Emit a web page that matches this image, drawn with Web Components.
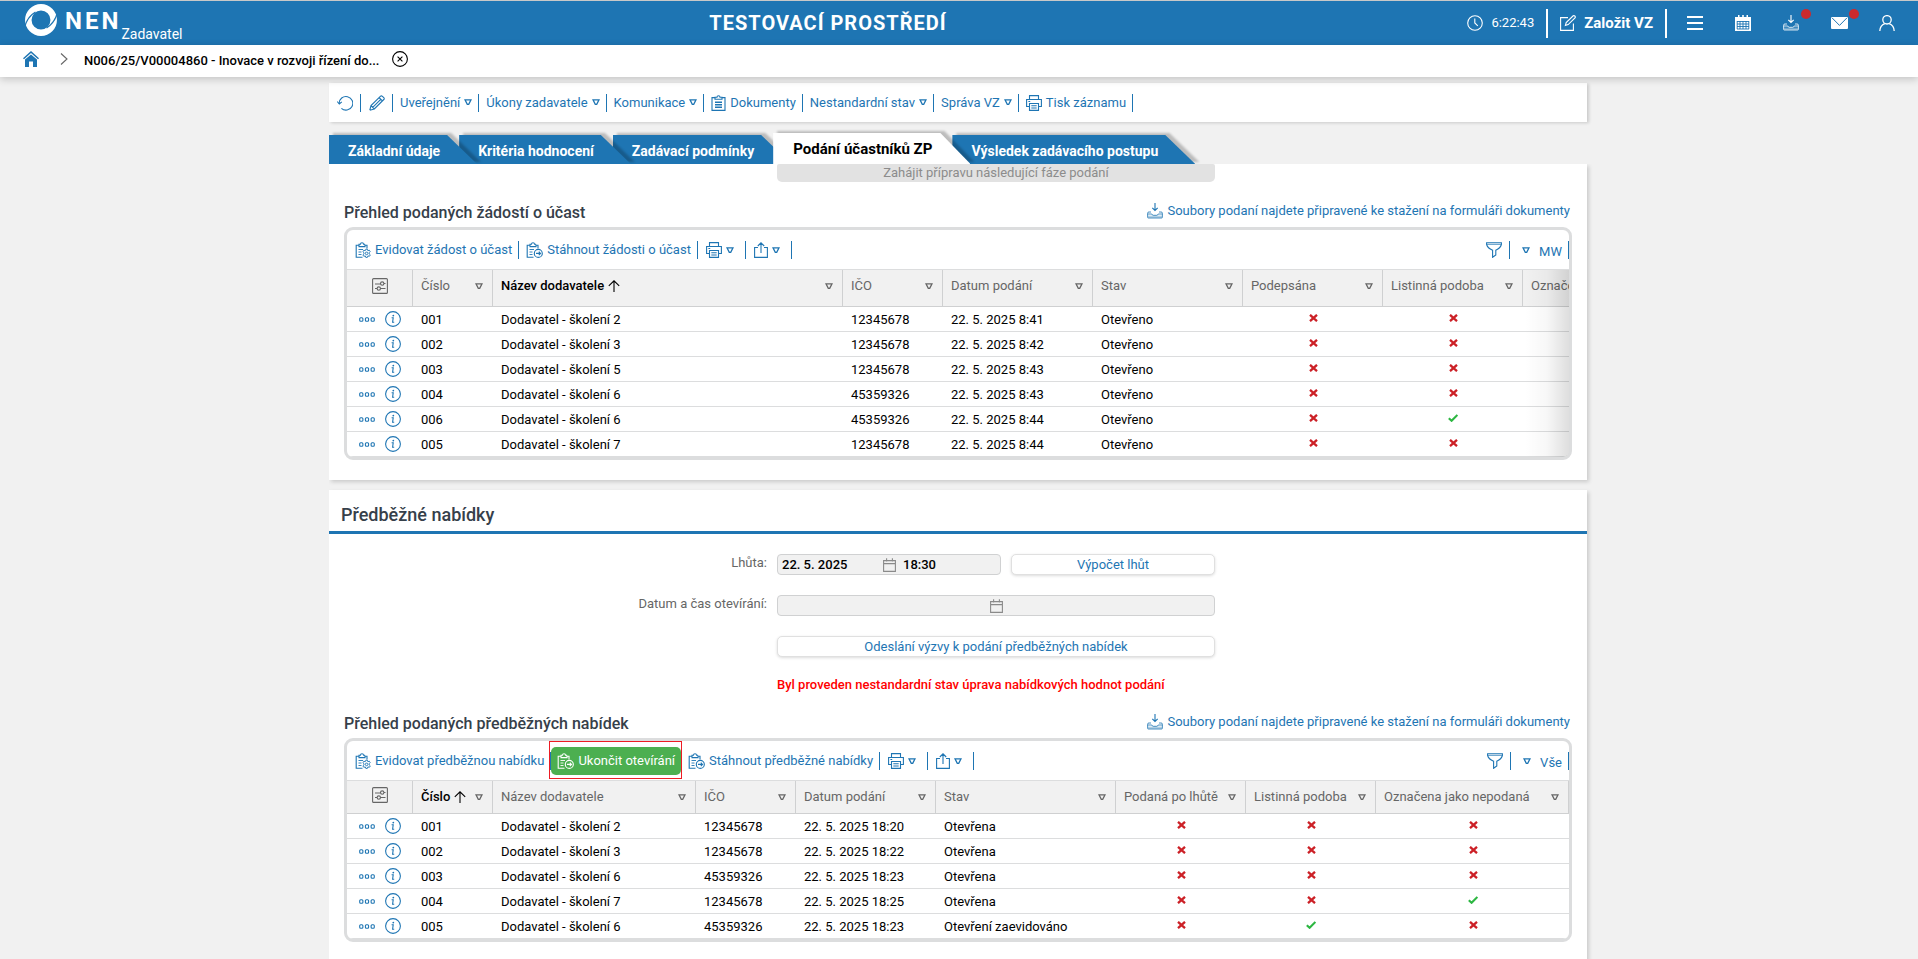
<!DOCTYPE html>
<html lang="cs">
<head>
<meta charset="utf-8">
<title>NEN – Zadavatel</title>
<style>
html,body{height:100%}
body{margin:0;background:#f1f1f1;color:#000;font:13px/16px Roboto,"Liberation Sans",sans-serif;overflow:hidden;
--blue:#1e75b3;--line:#dcddde}
</style>
</head>
<body>
<nen-app></nen-app>
<script>
const S='fill="none" stroke="currentColor" stroke-width="1.1"';
const CLIP='<path d="M12 6.500V3.200H10M4 3.200H1.200V15.300H7.500M10 2.400V4.600H4V2.200H5.400Q5.500.7 7 .7T8.600 2.200H10"/><path d="M3.500 7.500H8M3.500 10H6.500M3.500 12.500H6.500" stroke-width=".9"/>';
const ICONS={
 refresh:[16,16,`<g ${S}><path d="M2.2 8.5A6.8 6.8 0 1 1 4.4 13.3"/><path d="M.3 6.6 2.3 9 4.8 6.8"/></g>`],
 pencil:[16,16,`<g ${S}><path d="M.8 15.2 2 10.6 11.6 1.2Q12.4.4 13.4 1.3L14.8 2.7Q15.7 3.7 14.8 4.5L5.3 14 .8 15.2M2 10.6 5.3 14M10.2 2.6 13.4 5.9M3.7 12.3 12 4.2"/></g>`],
 doc:[15,16,`<g ${S}><path d="M4 2.6H1V15.4H14V2.6H11"/><path d="M4 4.2V2.2H6Q6 .7 7.5.7T9 2.2H11V4.2Z"/><path stroke-width="1.4" d="M4 7.3h7M4 9.8h7M4 12.3h7"/></g>`],
 printer:[16,16,`<g ${S}><path d="M3.5 4.5V.6H12.5V4.5M3.5 11.5H.6V4.5H15.4V11.5H12.5"/><path d="M3.5 8.5H12.5V15.4H3.5ZM5.3 10.8H10.7M5.3 13H10.7M2.4 6.5h1.8"/></g>`],
 share:[14,16,`<g ${S}><path d="M4 5.5H.6V15.4H13.4V5.5H10M7 11V1M3.8 4 7 .8 10.2 4"/></g>`],
 funnel:[16,16,`<g ${S}><path d="M.6.8H15.4V2.5Q14.5 6 9.8 8.2V13L6.6 15.3V8.2Q1.5 6 .6 2.5Z"/><path d="M1 2.4H15" stroke-width=".7"/></g>`],
 clipgear:[16,16,`<g ${S}>${CLIP}<circle cx="11.600" cy="11.400" r="1.300" stroke-width=".9"/><path stroke-width=".9" d="M10.800 7.200h1.600l.4 1.500 1.500-.5.9 1.400-1 1.100v1.200l1.100 1-.9 1.400-1.500-.4-.5 1.500h-1.600l-.5-1.500-1.500.4-.9-1.400 1.100-1.100v-1.100l-1.100-1 .9-1.500 1.500.5Z"/></g>`],
 cliparrow:[17,16,`<g ${S}>${CLIP}<circle cx="12.300" cy="11.400" r="4"/><path d="M10 11.400h4.400M12.800 9.700l1.700 1.700-1.700 1.700"/></g>`],
 download:[16,16,`<g ${S}><path d="M8 0V7.4M5.3 4.8 8 7.5l2.7-2.7"/><path d="M4 9H1.2L.6 10.5V14.3Q.6 15 1.3 15H14.7Q15.4 15 15.4 14.3V10.5L14.8 9H12" stroke-width=".8"/><path d="M.6 11H4.8Q5.2 12.3 6.2 12.3H9.8Q10.8 12.3 11.2 11H15.4"  stroke-width=".8"/></g><path d="M1 12.6H15V14.8H1Z" fill="currentColor" opacity=".35"/>`],
 tri:[8,7,`<path d="M1 .9H7L4.7 5.4H3.3Z" fill="none" stroke="currentColor" stroke-width="1.3"/>`],
 up:[12,12,`<path d="M6 12V1M.8 5.8 6 .8l5.2 5" ${S}/>`],
 sliders:[16,16,`<g ${S}><rect x=".6" y=".6" width="14.8" height="14.8" rx="1"/><path d="M3 6H8.5M12 5.5h1.5M3 10.5H5M8.5 10.5h5"/><circle cx="10.2" cy="5.6" r="1.7"/><circle cx="6.8" cy="10.6" r="1.7"/></g>`],
 dots:[16,5,`<g ${S}><rect x=".7" y=".8" width="3.2" height="3.4" rx="1"/><rect x="6.4" y=".8" width="3.2" height="3.4" rx="1"/><rect x="12.1" y=".8" width="3.2" height="3.4" rx="1"/></g>`],
 info:[16,16,`<circle cx="8" cy="8" r="7.4" ${S}/><path d="M6.6 6.8H8.2L7.6 11.2H9.2" ${S}/><circle cx="8.3" cy="4.6" r=".9" fill="currentColor"/>`],
 cross:[10,8,`<path d="M2 .8 9 7.2M9 .8 2 7.2" stroke="#cc2127" stroke-width="2.3"/>`],
 check:[10,8,`<path d="M.8 4.2 3.6 6.8 9.4.9" fill="none" stroke="#2db742" stroke-width="2.1"/>`],
 cal:[13,14,`<g ${S}><path d="M.6 2.6H12.4V13.4H.6ZM.6 5.6H12.4M3.6.3V3.6M9.4.3V3.6"/></g>`],
 home:[16,16,`<path d="M0 7.2 8 0 16 7.2 15 8.3 8 2.1 1 8.3Z" fill="currentColor"/><path d="M2 8.6 8 3.4 14 8.6V16H10V10.5H6V16H2Z" fill="currentColor"/>`],
 chev:[8,12,`<path d="M1 .5 7 6 1 11.5" ${S}/>`],
 close:[16,16,`<circle cx="8" cy="8" r="7.4" ${S}/><path d="M5.6 5.6l4.8 4.8M10.4 5.6 5.600 10.4" ${S}/>`],
 clock:[16,16,`<circle cx="8" cy="8" r="7.3" ${S}/><path d="M7.8 3.4V8L10.8 10.8" ${S}/>`],
 edit:[16,16,`<g ${S}><path d="M8 2.6H.6V15.4H13.4V8.5"/><path d="M5.4 10.4 6.2 7.6 13.2.8Q14 .3 14.8 1T15.2 2.6L8.2 9.6Z"/></g>`],
 burger:[16,14,`<path d="M0 1H16M0 7H16M0 13H16" stroke="currentColor" stroke-width="1.9"/>`],
 calendar:[16,16,`<path d="M0 2H3V0H4.5V2H7.2V0H8.8V2H11.5V0H13V2H16V16H0Z" fill="currentColor"/><path d="M2 6.5H14M2 9H14M2 11.5H14M2 14H14M2.2 6V14M5 6V14M8 6V14M11 6V14M13.8 6V14" stroke="#1e75b3" stroke-width=".9"/>`],
 mail:[17,12,`<rect width="17" height="12" rx="1" fill="currentColor"/><path d="M1 .8 8.5 8.4 16 .8" fill="none" stroke="#1e75b3" stroke-width="1"/>`],
 user:[16,16,`<g fill="none" stroke="currentColor" stroke-width="1.3"><circle cx="8" cy="4.8" r="4.2"/><path d="M.8 16Q1 10.4 5.8 8.6M15.2 16Q15 10.4 10.2 8.6"/></g>`],
 logo:[32,32,`<circle cx="16" cy="16" r="12.700" fill="none" stroke="#fff" stroke-width="6.500"/><path d="M-.5 23.500C1.500 16 4.500 11.500 10.500 8M32.500 8.500C30.500 16 27.500 20.500 21.500 24" fill="none" stroke="#1e75b3" stroke-width="1.200"/>`]
};
const def=(name,html,init)=>customElements.define(name,class extends HTMLElement{
 connectedCallback(){
  if(this.shadowRoot)return;
  const t=document.createElement('template');
  t.innerHTML=typeof html==='function'?html(this):html;
  this.attachShadow({mode:'open'}).append(t.content.cloneNode(true));
  if(init)init(this,this.shadowRoot);
 }});
const ico=n=>`<nen-icon name="${n}"></nen-icon>`;
const BTN='button{font:inherit;color:inherit;background:none;border:0;margin:0;padding:0;cursor:pointer}';

def('nen-icon',el=>{const [w,h,b]=ICONS[el.getAttribute('name')];
 return `<style>:host{display:inline-block;flex:none;line-height:0}svg{display:block}</style><svg width="${w}" height="${h}" viewBox="0 0 ${w} ${h}" aria-hidden="true">${b}</svg>`});

/* One action of a toolbar: optional icon, label, optional menu mark, closing rule */
def('nen-tool',el=>{const i=el.getAttribute('icon'),m=el.hasAttribute('menu'),l=el.getAttribute('label')||'';
 return `<style>:host{display:flex;align-items:center;color:var(--blue)}${BTN}
 button{display:flex;align-items:center;gap:4px;height:18px;padding:0 7px 0 8px;border-right:1px solid var(--blue);white-space:nowrap}
 :host([label]) button{padding:0 6px 0 7px}
 :host([compact]) button{padding-right:11px}
 :host([view]) button{flex-direction:row-reverse;gap:9px;padding-left:12px}
 :host([view]) span{padding-top:4px}
 :host([primary]){position:relative}
 :host([primary]) button{height:28px;padding:0 6px;border:0;border-radius:5px;background:#4caf50;color:#fff}
 :host([primary])::after{content:"";position:absolute;inset:-6px -1px -4px -2px;border:1px solid #ed1c24;pointer-events:none}
 </style><button type="button" ${l?'':`aria-label="${el.getAttribute('hint')}"`}>${i?ico(i):''}${l?`<span>${l}</span>`:''}${m?ico('tri'):''}</button>`});

def('nen-header',`<style>
:host{display:flex;align-items:center;height:44px;border-top:1px solid #c8c8c8;background:var(--blue);color:#fff}
${BTN}
a{display:flex;color:inherit;text-decoration:none;padding-left:25px}
.n{font-size:24px;line-height:28px;font-weight:700;letter-spacing:3px;margin:3px 0 0 8px}
.z{font-size:14px;line-height:16px;margin-top:22px;padding-right:6px}
h1{flex:1;text-align:center;margin:0;font-size:20px;line-height:24px;font-weight:700;letter-spacing:1px}
.t,.c{display:flex;align-items:center;gap:8px}
.c{font-size:15px;font-weight:700;height:29px;border:solid #fff;border-width:0 2px;padding:0 12px;margin:0 20px 0 12px}
nav{display:flex;margin-right:23px;gap:32px}
nav button{position:relative;width:16px;height:16px;display:grid;place-items:center}
.d::after{content:"";position:absolute;left:18px;top:-6px;width:10px;height:10px;border-radius:50%;background:#cb2a2e}
</style>
<a href="#" aria-label="NEN Zadavatel">${ico('logo')}<span class="n">NEN</span><span class="z">Zadavatel</span></a>
<h1>TESTOVACÍ PROSTŘEDÍ</h1>
<div class="t">${ico('clock')}<time>6:22:43</time></div>
<button class="c" type="button">${ico('edit')}Založit VZ</button>
<nav><button aria-label="Menu">${ico('burger')}</button><button aria-label="Kalendář">${ico('calendar')}</button><button class="d" aria-label="Stažené soubory">${ico('download')}</button><button class="d" aria-label="Zprávy">${ico('mail')}</button><button aria-label="Uživatel">${ico('user')}</button></nav>`);

def('nen-crumbs',`<style>
:host{display:flex;align-items:center;height:32px;background:#fff;box-shadow:0 2px 8px rgba(0,0,0,.2);position:relative;padding-left:23px}
${BTN} a{color:var(--blue)} .h{margin-right:21px} .chev{color:#666;margin-right:16px} .p{color:#000;font-weight:500;text-decoration:none;margin-right:13px}
</style><a class="h" href="#" aria-label="Domů">${ico('home')}</a><span class="chev">${ico('chev')}</span><a class="p" href="#">N006/25/V00004860 - Inovace v rozvoji řízení do...</a><button aria-label="Zavřít">${ico('close')}</button>`);

def('nen-tabs',`<style>
:host{display:flex;align-items:flex-end;height:31px;padding-top:11px;overflow:hidden;font-size:14px;font-weight:700}
</style><slot></slot>`);
def('nen-tab',el=>`<style>
:host{display:block;position:relative;height:29px}
:host([active]){height:31px}
${BTN}
.s{position:absolute;inset:0 -18px 0 0;filter:drop-shadow(4px -2px 1px rgba(0,0,0,.22))}
.s::before{content:"";position:absolute;inset:0;background:var(--blue);clip-path:polygon(0 0,calc(100% - 30px) 0,100% 100%,0 100%)}
button{position:relative;height:100%;padding:2px 19px 0;color:#fff;font-weight:700;white-space:nowrap}
:host([active]) .s::before{background:#fff}
:host([active]) button{color:#000;font-size:15px;padding:0 20px}
</style><div class="s"></div><button type="button"><slot></slot></button>`,el=>{
 el.style.zIndex=el.hasAttribute('active')?9:8-[...el.parentNode.children].indexOf(el)});

def('nen-panel',`<style>
:host{display:block;background:#fff;box-shadow:2px 2px 4px rgba(0,0,0,.16)}
h2{margin:0;font-size:18px;line-height:24px;font-weight:500;padding:13px 12px 4px;border-bottom:3px solid var(--blue);color:#36404a}
</style><slot></slot>`,(el,r)=>{
 const h=el.getAttribute('heading'); if(h){const e=document.createElement('h2');e.textContent=h;r.querySelector('slot').before(e)}});

/* Table block: title with download link, toolbar, data table */
const GRIDS={
 requests:{title:'Přehled podaných žádostí o účast',view:'MW',head:36,fade:true,width:'1376px',
  tools:[['clipgear','Evidovat žádost o účast'],['cliparrow','Stáhnout žádosti o účast']],
  cols:[['Číslo',80],['Název dodavatele',350,1],['IČO',100],['Datum podání',150],['Stav',150],['Podepsána',140],['Listinná podoba',140],['Označena jako nepodaná',200]],
  rows:[['001','Dodavatel - školení 2','12345678','22. 5. 2025 8:41','Otevřeno',0,0,''],
   ['002','Dodavatel - školení 3','12345678','22. 5. 2025 8:42','Otevřeno',0,0,''],
   ['003','Dodavatel - školení 5','12345678','22. 5. 2025 8:43','Otevřeno',0,0,''],
   ['004','Dodavatel - školení 6','45359326','22. 5. 2025 8:43','Otevřeno',0,0,''],
   ['006','Dodavatel - školení 6','45359326','22. 5. 2025 8:44','Otevřeno',0,1,''],
   ['005','Dodavatel - školení 7','12345678','22. 5. 2025 8:44','Otevřeno',0,0,'']]},
 offers:{title:'Přehled podaných předběžných nabídek',view:'Vše',head:32,width:'100%',
  tools:[['clipgear','Evidovat předběžnou nabídku'],['cliparrow','Ukončit otevírání','primary'],['cliparrow','Stáhnout předběžné nabídky']],
  cols:[['Číslo',80,1],['Název dodavatele',0],['IČO',100],['Datum podání',140],['Stav',180],['Podaná po lhůtě',130],['Listinná podoba',130],['Označena jako nepodaná',193]],
  rows:[['001','Dodavatel - školení 2','12345678','22. 5. 2025 18:20','Otevřena',0,0,0],
   ['002','Dodavatel - školení 3','12345678','22. 5. 2025 18:22','Otevřena',0,0,0],
   ['003','Dodavatel - školení 6','45359326','22. 5. 2025 18:23','Otevřena',0,0,0],
   ['004','Dodavatel - školení 7','12345678','22. 5. 2025 18:25','Otevřena',0,0,1],
   ['005','Dodavatel - školení 6','45359326','22. 5. 2025 18:23','Otevření zaevidováno',0,1,0]]}
};
def('nen-grid',el=>{const g=GRIDS[el.getAttribute('source')];
const cell=v=>typeof v==='number'?`<td class="m">${ico(v?'check':'cross')}</td>`:`<td>${v}</td>`;
return `<style>
:host{display:block;padding:18px 15px 0}
${BTN}
.top{display:flex;justify-content:space-between;height:27px;align-items:flex-start}
h3{margin:0;font-size:16px;line-height:26px;font-weight:500;color:#36404a}
a{display:flex;align-items:center;gap:4px;line-height:22px;color:var(--blue);text-decoration:none;margin-right:2px}
.box{border:3px solid var(--line);border-radius:9px;overflow:hidden}
.bar{display:flex;align-items:center;height:38px;padding:1px 0 0 1px;border-bottom:1px solid var(--line)}
.bar i{flex:1}
.wrap{position:relative;overflow:hidden}
.fade::after{content:"";position:absolute;top:0;right:0;bottom:0;width:44px;background:linear-gradient(90deg,rgba(0,0,0,0),rgba(0,0,0,.03) 50%,rgba(0,0,0,.13));pointer-events:none}
table{table-layout:fixed;border-collapse:separate;border-spacing:0;width:${g.width}}
th{height:${g.head}px;padding:0;background:#f1f1f1;color:#666;font-weight:400;text-align:left;vertical-align:top;border-right:1px solid #cfd0d1;border-bottom:1px solid #cfd0d1}
th div{display:flex;align-items:center;padding:0 9px 0 8px;height:32px;white-space:nowrap;gap:4px}
th .tri{margin-left:auto}
th.sort span{color:#000;font-weight:500}th.sort .up{color:#000}
th.act{text-align:center;vertical-align:middle}
.act button{display:block;margin:0 auto}
td{padding:2px 8px 0;box-sizing:border-box;height:25px;border-bottom:1px solid var(--line);white-space:nowrap}
td.m{text-align:center;padding:0}td.m nen-icon{display:block;width:10px;margin:0 auto 2px}
td.a{padding:0}td.a div{display:flex;align-items:center;gap:10px;padding-left:12px;color:var(--blue)}
td.a button{display:flex}
</style>
<div class="top"><h3>${g.title}</h3><a href="#">${ico('download')}<span>Soubory podaní najdete připravené ke stažení na formuláři dokumenty</span></a></div>
<div class="box"><div class="bar">${g.tools.map(([i,l,p])=>`<nen-tool icon="${i}" label="${l}" ${p||''}></nen-tool>`).join('')}<nen-tool icon="printer" menu compact hint="Tisk"></nen-tool><nen-tool icon="share" menu compact hint="Export"></nen-tool><i></i><nen-tool icon="funnel" hint="Filtr"></nen-tool><nen-tool label="${g.view}" menu view></nen-tool></div>
<div class="wrap ${g.fade?'fade':''}"><table><colgroup><col style="width:66px">${g.cols.map(c=>`<col ${c[1]?`style="width:${c[1]}px"`:''}>`).join('')}</colgroup>
<thead><tr><th class="act"><button aria-label="Nastavení sloupců">${ico('sliders')}</button></th>${g.cols.map(c=>`<th scope="col" class="${c[2]?'sort':''}"><div><span>${c[0]}</span>${c[2]?'<nen-icon class="up" name="up"></nen-icon>':''}<nen-icon class="tri" name="tri"></nen-icon></div></th>`).join('')}</tr></thead>
<tbody>${g.rows.map(r=>`<tr><td class="a"><div><button aria-label="Akce">${ico('dots')}</button><button aria-label="Detail">${ico('info')}</button></div></td>${r.map(cell).join('')}</tr>`).join('')}</tbody></table></div></div>`});

def('nen-form',`<style>
:host{display:grid;grid-template-columns:448fr 438px 372fr;row-gap:20px;padding-top:20px}
${BTN}
label{grid-column:1;text-align:right;padding-right:10px;line-height:17px;color:#666}
.f{grid-column:2;display:flex;gap:10px;height:21px}
.in{display:flex;align-items:center;flex:1;min-width:0;box-sizing:border-box;border:1px solid #d0d1d2;border-radius:4px;background:#f1f1f1;color:#8a8a8a}
input{flex:1;min-width:0;width:0;font:500 13px/16px Roboto,"Liberation Sans",sans-serif;border:0;margin:0;background:none;color:#000;padding:0 4px;height:17px;outline:0}
.in.short input{flex:none;width:105px;box-sizing:border-box}
.in.short input:last-child{padding-left:7px}
.b{flex:none;box-sizing:border-box;height:21px;padding-top:1px;border:1px solid #e0e0e0;border-radius:5px;background:#fff;color:var(--blue);box-shadow:0 1px 3px rgba(0,0,0,.14)}
.half{width:204px}.full{width:100%}
p{grid-column:2;margin:0;color:#f00;font-weight:500;white-space:nowrap}
</style>
<label for="d">Lhůta:</label><div class="f"><div class="in short"><input id="d" value="22. 5. 2025" readonly>${ico('cal')}<input aria-label="Čas lhůty" value="18:30" readonly></div><button class="b half" type="button">Výpočet lhůt</button></div>
<label for="o">Datum a čas otevírání:</label><div class="f"><div class="in"><input id="o" readonly>${ico('cal')}<input aria-label="Čas otevírání" readonly></div></div>
<div class="f"><button class="b full" type="button">Odeslání výzvy k podání předběžných nabídek</button></div>
<p>Byl proveden nestandardní stav úprava nabídkových hodnot podání</p>`);

def('nen-app',`<style>
:host{display:flex;flex-direction:column;height:100vh;overflow:hidden}
${BTN}
nen-header,nen-crumbs{flex:none}nen-crumbs{z-index:10}
main{flex:1;min-height:0;display:flex;flex-direction:column;width:100%;max-width:1258px;margin:6px auto 0;padding-right:2px}
.tools{flex:none;display:flex;align-items:center;height:39px;background:#fff;box-shadow:2px 1px 3px rgba(0,0,0,.16)}
.scroll{flex:1;min-height:0;overflow:hidden;padding-right:8px;margin-right:-8px}
nen-tabs{flex:none}
.next{display:grid;grid-template-columns:448fr 438px 372fr}
.next button{grid-column:2;height:18px;border-radius:2px 2px 5px 5px;background:#e2e2e2;color:#8c8c8c}
nen-panel.a{padding-bottom:20px;margin-bottom:10px}
nen-panel.b{padding-bottom:40px}
</style>
<nen-header></nen-header><nen-crumbs></nen-crumbs>
<main>
<div class="tools"><nen-tool icon="refresh" hint="Obnovit"></nen-tool><nen-tool icon="pencil" hint="Upravit"></nen-tool><nen-tool label="Uveřejnění" menu></nen-tool><nen-tool label="Úkony zadavatele" menu></nen-tool><nen-tool label="Komunikace" menu></nen-tool><nen-tool icon="doc" label="Dokumenty"></nen-tool><nen-tool label="Nestandardní stav" menu></nen-tool><nen-tool label="Správa VZ" menu></nen-tool><nen-tool icon="printer" label="Tisk záznamu"></nen-tool></div>
<nen-tabs><nen-tab>Základní údaje</nen-tab><nen-tab>Kritéria hodnocení</nen-tab><nen-tab>Zadávací podmínky</nen-tab><nen-tab active>Podání účastníků ZP</nen-tab><nen-tab>Výsledek zadávacího postupu</nen-tab></nen-tabs>
<div class="scroll">
<nen-panel class="a"><div class="next"><button type="button" disabled>Zahájit přípravu následující fáze podání</button></div><nen-grid source="requests"></nen-grid></nen-panel>
<nen-panel class="b" heading="Předběžné nabídky"><nen-form></nen-form><nen-grid source="offers"></nen-grid></nen-panel>
</div>
</main>`);
</script>
</body>
</html>
